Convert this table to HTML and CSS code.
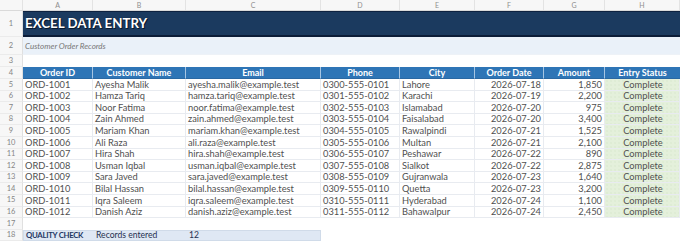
FILE: index.html
```html
<!DOCTYPE html>
<html>
<head>
<meta charset="utf-8">
<link rel="stylesheet" href="styles.css">
</head>
<body>
<div class="sheet">
  <div class="row colhead">
    <div class="corner"></div>
    <div>A</div><div>B</div><div>C</div><div>D</div><div>E</div><div>F</div><div>G</div><div>H</div>
  </div>
  <div class="row r-title">
    <div class="rn">1</div>
    <div class="title">EXCEL DATA ENTRY</div>
  </div>
  <div class="row r-sub">
    <div class="rn">2</div>
    <div class="subtitle">Customer Order Records</div>
  </div>
  <div class="row r-blank">
    <div class="rn">3</div>
  </div>
  <div class="row r-head">
    <div class="rn">4</div>
    <div>Order ID</div><div>Customer Name</div><div>Email</div><div>Phone</div><div>City</div><div>Order Date</div><div>Amount</div><div>Entry Status</div>
  </div>
  <div class="row r-data"><div class="rn">5</div><div>ORD-1001</div><div>Ayesha Malik</div><div>ayesha.malik@example.test</div><div>0300-555-0101</div><div>Lahore</div><div class="num">2026-07-18</div><div class="num">1,850</div><div class="status">Complete</div></div>
  <div class="row r-data"><div class="rn">6</div><div>ORD-1002</div><div>Hamza Tariq</div><div>hamza.tariq@example.test</div><div>0301-555-0102</div><div>Karachi</div><div class="num">2026-07-19</div><div class="num">2,200</div><div class="status">Complete</div></div>
  <div class="row r-data"><div class="rn">7</div><div>ORD-1003</div><div>Noor Fatima</div><div>noor.fatima@example.test</div><div>0302-555-0103</div><div>Islamabad</div><div class="num">2026-07-20</div><div class="num">975</div><div class="status">Complete</div></div>
  <div class="row r-data"><div class="rn">8</div><div>ORD-1004</div><div>Zain Ahmed</div><div>zain.ahmed@example.test</div><div>0303-555-0104</div><div>Faisalabad</div><div class="num">2026-07-20</div><div class="num">3,400</div><div class="status">Complete</div></div>
  <div class="row r-data"><div class="rn">9</div><div>ORD-1005</div><div>Mariam Khan</div><div>mariam.khan@example.test</div><div>0304-555-0105</div><div>Rawalpindi</div><div class="num">2026-07-21</div><div class="num">1,525</div><div class="status">Complete</div></div>
  <div class="row r-data"><div class="rn">10</div><div>ORD-1006</div><div>Ali Raza</div><div>ali.raza@example.test</div><div>0305-555-0106</div><div>Multan</div><div class="num">2026-07-21</div><div class="num">2,100</div><div class="status">Complete</div></div>
  <div class="row r-data"><div class="rn">11</div><div>ORD-1007</div><div>Hira Shah</div><div>hira.shah@example.test</div><div>0306-555-0107</div><div>Peshawar</div><div class="num">2026-07-22</div><div class="num">890</div><div class="status">Complete</div></div>
  <div class="row r-data"><div class="rn">12</div><div>ORD-1008</div><div>Usman Iqbal</div><div>usman.iqbal@example.test</div><div>0307-555-0108</div><div>Sialkot</div><div class="num">2026-07-22</div><div class="num">2,875</div><div class="status">Complete</div></div>
  <div class="row r-data"><div class="rn">13</div><div>ORD-1009</div><div>Sara Javed</div><div>sara.javed@example.test</div><div>0308-555-0109</div><div>Gujranwala</div><div class="num">2026-07-23</div><div class="num">1,640</div><div class="status">Complete</div></div>
  <div class="row r-data"><div class="rn">14</div><div>ORD-1010</div><div>Bilal Hassan</div><div>bilal.hassan@example.test</div><div>0309-555-0110</div><div>Quetta</div><div class="num">2026-07-23</div><div class="num">3,200</div><div class="status">Complete</div></div>
  <div class="row r-data"><div class="rn">15</div><div>ORD-1011</div><div>Iqra Saleem</div><div>iqra.saleem@example.test</div><div>0310-555-0111</div><div>Hyderabad</div><div class="num">2026-07-24</div><div class="num">1,100</div><div class="status">Complete</div></div>
  <div class="row r-data"><div class="rn">16</div><div>ORD-1012</div><div>Danish Aziz</div><div>danish.aziz@example.test</div><div>0311-555-0112</div><div>Bahawalpur</div><div class="num">2026-07-24</div><div class="num">2,450</div><div class="status">Complete</div></div>
  <div class="row r-blank r-small">
    <div class="rn">17</div>
  </div>
  <div class="row r-qc">
    <div class="rn">18</div>
    <div class="qc-box">
      <div class="qc-label">QUALITY CHECK</div>
      <div>Records entered</div>
      <div>12</div>
    </div>
  </div>
</div>
</body>
</html>
```

FILE: styles.css
```css
* { box-sizing: border-box; }
html, body {
  margin: 0;
  padding: 0;
  background: #ffffff;
}
body {
  font-family: "Lato", "Liberation Sans", sans-serif;
  width: 680px;
  height: 243px;
  overflow: hidden;
}
.sheet {
  display: flex;
  flex-direction: column;
}
.row {
  display: grid;
  grid-template-columns: 23px 70px 93px 135px 79px 75px 69px 61px 75px;
  height: 11.6px;
  font-size: 9.3px;
  line-height: 1;
}
.row > div {
  display: flex;
  align-items: center;
  white-space: nowrap;
  overflow: hidden;
}
.rn {
  justify-content: center;
  background: #f7f7f7;
  color: #858585;
  font-size: 7.5px;
  border-right: 1px solid #e0e0e0;
  border-bottom: 1px solid #ebebeb;
}

/* column letters */
.colhead {
  height: 11px;
  background: #f7f7f7;
  border-bottom: 1px solid #dadada;
}
.colhead > div {
  justify-content: center;
  color: #8f8f8f;
  font-size: 7px;
  border-right: 1px solid #e3e3e3;
}

/* title */
.r-title {
  height: 26px;
}
.title {
  grid-column: 2 / 10;
  background: #1b3a5f;
  border-top: 1px solid #0e2240;
  border-bottom: 2px solid #0b1c38;
  color: #ffffff;
  font-weight: 700;
  font-size: 13.3px;
  padding-left: 2px;
  text-shadow: 0 0 1px #061226, 1px 1px 0 #0a1a30;
}

/* subtitle */
.r-sub {
  height: 18px;
}
.subtitle {
  grid-column: 2 / 10;
  background: #eaf1f9;
  color: #777777;
  font-style: italic;
  font-size: 8px;
  padding-left: 2px;
  border-bottom: 1px solid #eef2f7;
}

.r-blank {
  height: 12px;
}
.r-small {
  height: 11.6px;
}

/* header row */
.r-head {
  height: 12px;
}
.r-head > div:not(.rn) {
  justify-content: center;
  background: #2e75b6;
  color: #ffffff;
  font-weight: 700;
  font-size: 9px;
  border-right: 1px solid #a6c5e3;
  border-bottom: 1px solid #2a68a2;
}
.r-head > div:last-child {
  border-right: none;
}

/* data rows */
.r-data > div:not(.rn) {
  color: #505050;
  padding-left: 2px;
  border-right: 1px solid #e8ebf0;
  border-bottom: 1px solid #e8ebf0;
}
.r-data > .num {
  justify-content: flex-end;
  padding-left: 0;
  padding-right: 2px;
}
.r-data > .status {
  justify-content: center;
  padding-left: 0;
  background-color: #e4f0db;
  background-image: radial-gradient(circle, #d3e3c8 0.5px, transparent 0.8px);
  background-size: 4px 4px;
  color: #4a4a4a;
  border-right: none;
  border-bottom: 1px solid #e4f0db;
}

/* quality check */
.r-qc {
  height: 11.6px;
}
.qc-box {
  grid-column: 2 / 5;
  display: grid !important;
  grid-template-columns: 70px 93px 135px;
  background: #dfe8f4;
  border: 1px solid #d0dbe9;
  color: #1f3050;
}
.qc-box > div {
  display: flex;
  align-items: center;
  padding-left: 2px;
  font-size: 8.6px;
}
.qc-label {
  font-weight: 700;
  font-size: 7.8px !important;
  letter-spacing: -0.3px;
  color: #1f3864;
}
```
